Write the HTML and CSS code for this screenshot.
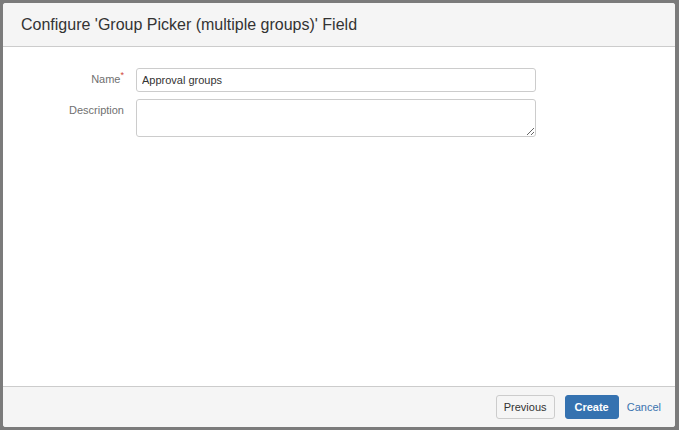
FILE: index.html
```html
<!DOCTYPE html>
<html>
<head>
<meta charset="utf-8">
<link rel="stylesheet" href="styles.css">
</head>
<body>
<div class="dialog">
  <header class="dialog-header">
    <h2 class="dialog-title">Configure 'Group Picker (multiple groups)' Field</h2>
  </header>
  <div class="dialog-body">
    <div class="field-row">
      <label class="field-label">Name<span class="req">*</span></label>
      <input class="text-input" type="text" value="Approval groups">
    </div>
    <div class="field-row">
      <label class="field-label">Description</label>
      <textarea class="textarea-input"></textarea>
    </div>
  </div>
  <footer class="dialog-footer">
    <button class="btn">Previous</button>
    <button class="btn btn-primary">Create</button>
    <a class="cancel-link">Cancel</a>
  </footer>
</div>
</body>
</html>
```
FILE: styles.css
```css
html, body {
  margin: 0;
  padding: 0;
  height: 100%;
}
body {
  background: #7b7b7b;
  font-family: "Liberation Sans", Arial, sans-serif;
  padding: 3px 4px 3px 3px;
  box-sizing: border-box;
}
.dialog {
  height: 100%;
  background: #fff;
  border-radius: 3px;
  display: flex;
  flex-direction: column;
  overflow: hidden;
}
.dialog-header {
  background: #f5f5f5;
  border-bottom: 1px solid #cccccc;
  height: 43px;
  display: flex;
  align-items: center;
  padding: 0 18px;
}
.dialog-title {
  margin: 0;
  font-size: 16px;
  font-weight: normal;
  color: #333333;
  padding-top: 1px;
}
.dialog-body {
  flex: 1;
  padding: 21px 0 0 0;
  display: flex;
  flex-direction: column;
  gap: 7px;
}
.field-row {
  display: flex;
  align-items: flex-start;
}
.field-label {
  width: 121px;
  text-align: right;
  font-size: 11px;
  color: #707070;
  padding-top: 5px;
  margin-right: 12px;
  box-sizing: border-box;
}
.req {
  color: #d04437;
  font-size: 9px;
  vertical-align: top;
  position: relative;
  top: -3px;
}
.text-input,
.textarea-input {
  width: 400px;
  box-sizing: border-box;
  border: 1px solid #cccccc;
  border-radius: 3px;
  font-family: "Liberation Sans", Arial, sans-serif;
  font-size: 11px;
  color: #333333;
  margin: 0;
  background: #fff;
}
.text-input {
  height: 24px;
  padding: 3px 5px;
}
.textarea-input {
  height: 38px;
  padding: 3px 5px;
  resize: vertical;
}
.dialog-footer {
  background: #f5f5f5;
  border-top: 1px solid #cccccc;
  height: 40px;
  display: flex;
  align-items: center;
  justify-content: flex-end;
  padding: 0 14px 0 0;
}
.btn {
  font-family: "Liberation Sans", Arial, sans-serif;
  font-size: 11px;
  height: 24px;
  padding: 0 7px;
  border: 1px solid #cccccc;
  border-radius: 3px;
  background: #f5f5f5;
  color: #333333;
  margin-right: 10px;
}
.btn-primary {
  background: #3572b0;
  border-color: #3572b0;
  color: #ffffff;
  font-weight: bold;
  padding: 0 9px;
  margin-right: 8px;
}
.cancel-link {
  font-size: 11px;
  color: #3b73af;
  padding-bottom: 1px;
}
```
